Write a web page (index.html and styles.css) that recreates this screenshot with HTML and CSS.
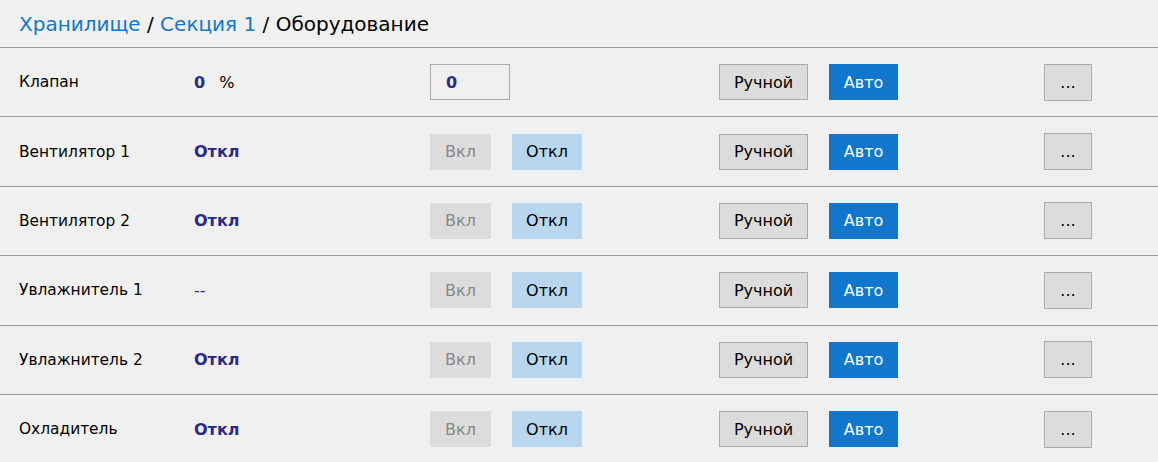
FILE: index.html
```html
<!DOCTYPE html>
<html lang="ru">
<head>
  <meta charset="UTF-8">
  <title>Оборудование</title>
  <link rel="stylesheet" href="styles.css">
</head>
<body>

  <!-- Путь -->
  <div class="crumbs">
    <a href="#">Хранилище</a>&nbsp;/&nbsp;<a href="#">Секция 1</a>&nbsp;/&nbsp;<span>Оборудование</span>
  </div>

  <!-- Клапан -->
  <div class="row">
    <div class="name">Клапан</div>
    <div class="value"><b>0</b><span class="unit">%</span></div>
    <div class="ctrl"><input class="input" type="text" value="0"></div>
    <div class="mode">
      <button class="btn manual">Ручной</button>
      <button class="btn auto">Авто</button>
    </div>
    <div><button class="btn more">...</button></div>
  </div>

  <div class="row">
    <div class="name">Вентилятор 1</div>
    <div class="value"><b>Откл</b></div>
    <div class="ctrl">
      <button class="btn on">Вкл</button>
      <button class="btn off">Откл</button>
    </div>
    <div class="mode">
      <button class="btn manual">Ручной</button>
      <button class="btn auto">Авто</button>
    </div>
    <div><button class="btn more">...</button></div>
  </div>

  <div class="row">
    <div class="name">Вентилятор 2</div>
    <div class="value"><b>Откл</b></div>
    <div class="ctrl">
      <button class="btn on">Вкл</button>
      <button class="btn off">Откл</button>
    </div>
    <div class="mode">
      <button class="btn manual">Ручной</button>
      <button class="btn auto">Авто</button>
    </div>
    <div><button class="btn more">...</button></div>
  </div>

  <div class="row">
    <div class="name">Увлажнитель 1</div>
    <div class="value">--</div>
    <div class="ctrl">
      <button class="btn on">Вкл</button>
      <button class="btn off">Откл</button>
    </div>
    <div class="mode">
      <button class="btn manual">Ручной</button>
      <button class="btn auto">Авто</button>
    </div>
    <div><button class="btn more">...</button></div>
  </div>

  <div class="row">
    <div class="name">Увлажнитель 2</div>
    <div class="value"><b>Откл</b></div>
    <div class="ctrl">
      <button class="btn on">Вкл</button>
      <button class="btn off">Откл</button>
    </div>
    <div class="mode">
      <button class="btn manual">Ручной</button>
      <button class="btn auto">Авто</button>
    </div>
    <div><button class="btn more">...</button></div>
  </div>

  <div class="row">
    <div class="name">Охладитель</div>
    <div class="value"><b>Откл</b></div>
    <div class="ctrl">
      <button class="btn on">Вкл</button>
      <button class="btn off">Откл</button>
    </div>
    <div class="mode">
      <button class="btn manual">Ручной</button>
      <button class="btn auto">Авто</button>
    </div>
    <div><button class="btn more">...</button></div>
  </div>

</body>
</html>
```

FILE: styles.css
```css
body {
  font-family: 'DejaVu Sans', sans-serif;
  margin: 0;
  padding: 0;
  background-color: #f0f0f0;
  color: #000;
}
.crumbs {
  height: 47px;
  display: flex;
  align-items: center;
  padding-left: 19px;
  font-size: 20px;
  border-bottom: 1px solid #999;
}
.crumbs a {
  color: #1177cc;
  text-decoration: none;
}
.row {
  height: 68.4px;
  display: grid;
  grid-template-columns: 175px 236px 289px 325px auto;
  align-items: center;
  padding-left: 19px;
  border-bottom: 1px solid #999;
  font-size: 16px;
}
.name {
  font-size: 15.4px;
}
.value {
  color: #2a2a8a;
}
.value b {
  font-weight: bold;
}
.unit {
  color: #000;
  margin-left: 14px;
}
.input {
  width: 80px;
  height: 36px;
  box-sizing: border-box;
  border: 1px solid #aaa;
  background-color: #f0f0f0;
  padding: 0 15px;
  font-family: inherit;
  font-size: 16px;
  font-weight: bold;
  color: #2a2a8a;
}
.ctrl, .mode {
  display: flex;
  gap: 21px;
}
.btn {
  height: 36px;
  box-sizing: border-box;
  border: none;
  font-family: inherit;
  font-size: 16px;
  padding: 0;
  cursor: pointer;
}
.on {
  width: 61px;
  background-color: #dcdcdc;
  color: #888;
}
.off {
  width: 70px;
  background-color: #b8d6ee;
  color: #000;
}
.manual {
  width: 89px;
  background-color: #dcdcdc;
  border: 1px solid #aaa;
  color: #000;
}
.auto {
  width: 69px;
  background-color: #1177cc;
  color: #fff;
}
.more {
  width: 48px;
  height: 37px;
  background-color: #dcdcdc;
  border: 1px solid #aaa;
  color: #000;
}
```
